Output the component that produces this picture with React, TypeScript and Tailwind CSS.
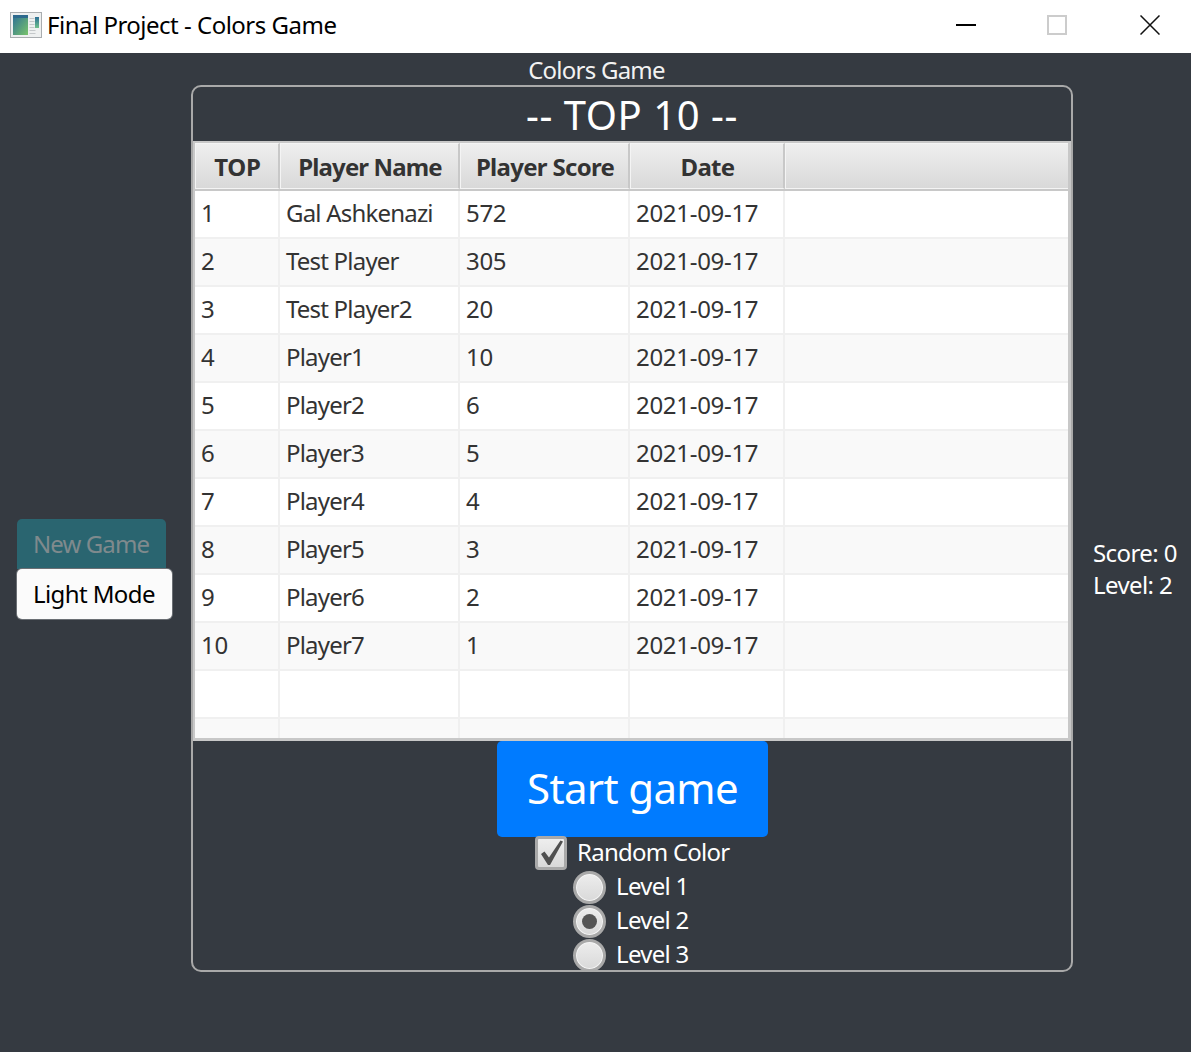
const font = { fontFamily: '"Noto Sans", "Open Sans", sans-serif' };

const rows: [string, string, string][] = [
  ["1", "Gal Ashkenazi", "572"],
  ["2", "Test Player", "305"],
  ["3", "Test Player2", "20"],
  ["4", "Player1", "10"],
  ["5", "Player2", "6"],
  ["6", "Player3", "5"],
  ["7", "Player4", "4"],
  ["8", "Player5", "3"],
  ["9", "Player6", "2"],
  ["10", "Player7", "1"],
];

const cols = ["w-[85px]", "w-[180px]", "w-[170px]", "w-[155px]", "flex-1"];
const heads = ["TOP", "Player Name", "Player Score", "Date", ""];
const headTrack = ["tracking-[-0.2px]", "tracking-[-0.85px]", "tracking-[-0.7px]", "tracking-[-0.7px]", ""];

function Row({ cells, odd, short }: { cells: string[]; odd: boolean; short?: boolean }) {
  return (
    <div className={`flex shrink-0 border-b-2 border-[#f0f0f0] ${short ? "h-[22px] border-b-0" : "h-[48px]"} ${odd ? "bg-[#f9f9f9]" : "bg-white"}`}>
      {cols.map((c, i) => (
        <div key={i} className={`${c} flex items-center pl-[6px] pb-[2px] border-r-2 border-[#f0f0f0] last:border-r-0 text-[24px] leading-none ${i === 0 || i >= 2 ? "tracking-[-0.3px]" : "tracking-[-0.8px]"} text-[#333333] whitespace-nowrap`}>
          {cells[i] ?? ""}
        </div>
      ))}
    </div>
  );
}

function Radio({ label, on }: { label: string; on?: boolean }) {
  return (
    <div className="flex shrink-0 items-center h-[34px] pl-[380px]">
      <div className="w-[33px] h-[33px] rounded-full bg-[linear-gradient(#ededed,#d9d9d9)] border-[3px] border-[#a9a9a9] shadow-[inset_0_0_0_1px_#f4f4f4] flex items-center justify-center">
        {on && <div className="w-[15px] h-[15px] rounded-full bg-[#555555]" />}
      </div>
      <span className="ml-[10px] pb-[2px] text-[24px] leading-none tracking-[-0.7px] text-white">{label}</span>
    </div>
  );
}

export default function App() {
  return (
    <div className="w-[1191px] h-[1052px] flex flex-col overflow-hidden bg-[#353a41]" style={font}>
      <div className="h-[53px] bg-white flex items-center shrink-0 pb-[4px]">
        <svg className="ml-[10px]" width="32" height="26" viewBox="0 0 32 26">
          <rect x="0.5" y="0.5" width="31" height="25" fill="#eef0f0" stroke="#a9adb0" />
          <defs>
            <linearGradient id="ic" x1="0" y1="0" x2="1" y2="1">
              <stop offset="0" stopColor="#2c6f96" />
              <stop offset="1" stopColor="#79c46b" />
            </linearGradient>
            <linearGradient id="ic2" x1="0" y1="0" x2="0" y2="1">
              <stop offset="0" stopColor="#2c6f96" />
              <stop offset="1" stopColor="#6fc08a" />
            </linearGradient>
          </defs>
          <rect x="3" y="3" width="15" height="20" fill="url(#ic)" />
          <rect x="3" y="3" width="15" height="3" fill="#2d6a8e" />
          <rect x="25" y="5" width="4" height="11" fill="url(#ic2)" />
          <path d="M19.5 6.5h5M19.5 9.5h5M19.5 12.5h5M19.5 15.5h5M19.5 18.5h6M19.5 21.5h6" stroke="#c4c8ca" />
        </svg>
        <span className="ml-[5px] text-[24px] leading-none tracking-[-0.5px] text-black whitespace-nowrap">Final Project - Colors Game</span>
        <div className="ml-auto flex items-center">
          <div className="w-[20px] h-[2px] bg-black mr-[71px]" />
          <div className="w-[20px] h-[20px] border-2 border-[#cccccc] mr-[73px]" />
          <svg className="mr-[31px]" width="20" height="20" viewBox="0 0 20 20">
            <path d="M0.5 0.5L19.5 19.5M19.5 0.5L0.5 19.5" stroke="#111111" strokeWidth="1.5" />
          </svg>
        </div>
      </div>

      <div className="flex-1 flex">
        <div className="w-[191px] shrink-0 pl-[17px] pt-[466px] flex flex-col items-start">
          <div className="w-[149px] h-[50px] rounded-t-[5px] bg-[#2a6570] flex items-center pl-[16px] text-[24px] leading-none tracking-[-0.9px] text-[#7f8a8d] whitespace-nowrap">
            New Game
          </div>
          <div className="w-[155px] h-[50px] rounded-[5px] bg-[#fbfbfb] shadow-[0_0_0_1px_#6b6f74] flex items-center pl-[16px] text-[24px] leading-none tracking-[-0.6px] text-black whitespace-nowrap">
            Light Mode
          </div>
        </div>

        <div className="w-[882px] shrink-0 flex flex-col">
          <div className="h-[32px] pt-[5px] text-center text-[24px] leading-[24px] tracking-[-0.75px] text-[#f2f2f2] pr-[71px] whitespace-nowrap">
            Colors Game
          </div>
          <div className="h-[887px] rounded-[10px] border-2 border-[#a9a9a9] flex flex-col">
            <div className="h-[54px] shrink-0 flex items-center justify-center pt-[2px] text-[40px] leading-none tracking-[0.55px] text-white whitespace-nowrap">
              -- TOP 10 --
            </div>
            <div className="h-[600px] shrink-0 border-[3px] border-t-[2px] border-l-[2px] border-[#c8c8c8] bg-white flex flex-col overflow-hidden">
              <div className="flex h-[48px] shrink-0 border-b-2 border-[#c8c8c8]">
                {cols.map((c, i) => (
                  <div key={i} className={`${c} flex items-center justify-center pt-[1px] pl-[1px] border border-r-2 border-[#f4f4f4] border-r-[#c8c8c8] last:border-r-0 bg-[linear-gradient(#efefef,#d9d9d9)] text-[24px] leading-none font-bold ${headTrack[i]} text-[#333333] whitespace-nowrap`}>
                    {heads[i]}
                  </div>
                ))}
              </div>
              {rows.map((r, i) => (
                <Row key={r[0]} cells={[r[0], r[1], r[2], "2021-09-17"]} odd={i % 2 === 1} />
              ))}
              <Row cells={[]} odd={false} />
              <Row cells={[]} odd={true} short />
            </div>
            <div className="h-[96px] shrink-0 flex pl-[304px]">
              <div className="w-[271px] h-[96px] rounded-[5px] bg-[#007bff] flex items-center justify-center pb-[2px] text-[42px] leading-none tracking-[-0.65px] text-white whitespace-nowrap">
                Start game
              </div>
            </div>
            <div className="flex shrink-0 items-center h-[34px] -mt-[1px] pl-[342px]">
              <div className="w-[32px] h-[34px] rounded-[4px] bg-[linear-gradient(#eeeeee,#d9d9d9)] border-[3px] border-[#a9a9a9] flex items-center justify-center">
                <svg width="26" height="28" viewBox="0 0 26 28">
                  <path d="M3 15L6.5 12.5L11 18.5L22.5 1.5L25 2.5L12 26H10Z" fill="#505050" />
                </svg>
              </div>
              <span className="ml-[10px] pb-[2px] text-[24px] leading-none tracking-[-0.75px] text-white whitespace-nowrap">Random Color</span>
            </div>
            <Radio label="Level 1" />
            <Radio label="Level 2" on />
            <Radio label="Level 3" />
          </div>
        </div>

        <div className="flex-1 pl-[20px] pt-[484px] text-[24px] leading-[32px] tracking-[-0.6px] text-white whitespace-nowrap">
          <div>Score: 0</div>
          <div>Level: 2</div>
        </div>
      </div>
    </div>
  );
}
